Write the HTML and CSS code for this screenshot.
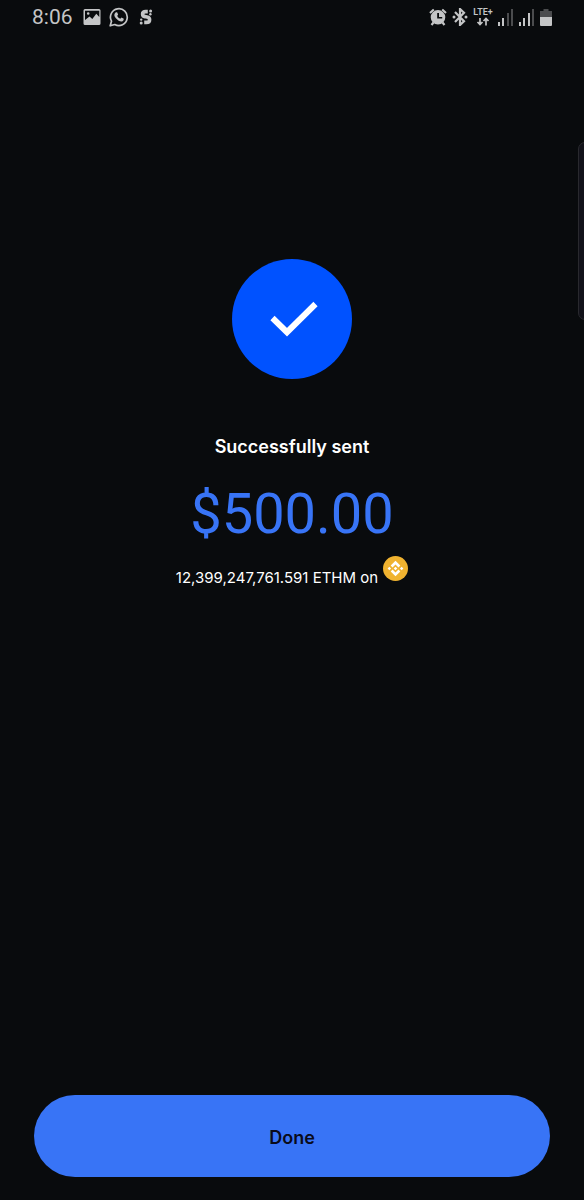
FILE: index.html
```html
<!DOCTYPE html>
<html lang="en">
<head>
<meta charset="utf-8">
<meta name="viewport" content="width=device-width, initial-scale=1">
<title>Successfully sent</title>
<link rel="stylesheet" href="styles.css">
</head>
<body>
<div class="screen">
  <header class="status">
    <div class="status-left">
      <span class="time">8:06</span>
      <svg class="icon" width="18" height="18" viewBox="0 0 18 18" aria-hidden="true"><path fill-rule="evenodd" d="M2 1h14q1.500 0 1.500 1.500v13q0 1.500-1.500 1.500H2Q.5 17 .5 15.500v-13Q.5 1 2 1zm0 1.800v9.200l4.500-3.600 2.800 2.600 4-5.200 3 3.200V2.800zM5.200 4.200a1.300 1.300 0 1 1 0 2.600 1.300 1.300 0 0 1 0-2.600z"/></svg>
      <svg class="icon" width="20" height="20" viewBox="0 0 20 20" aria-hidden="true"><path d="M1.200 18.800l1.300-4.600a8.400 8.400 0 1 1 3.300 3.300z" fill="none" stroke="currentColor" stroke-width="1.700" stroke-linejoin="round"/><path d="M6.800 5.200l1.300.1 1 2.300-.9 1.300q1 2 3.100 2.900l1.200-1.200 2.300 1.100q.1 1.800-1.300 2.500-1.500.7-4.200-.8-2.800-1.700-3.900-4.400-.6-2.400 1.400-3.800z"/></svg>
      <svg class="icon icon-s" width="14" height="18" viewBox="0 0 14 18" aria-hidden="true"><path d="M8.800 3.600H6.600Q3.600 3.600 3.600 6T6 8.600l2 .4q2.600.5 2.600 2.700 0 2.700-3.200 2.700H5.200" fill="none" stroke="currentColor" stroke-width="3.600"/><circle cx="11.600" cy="3" r="1.500"/><circle cx="11.400" cy="6.200" r="1.200"/><circle cx="2.200" cy="11.600" r="1.200"/><circle cx="2.200" cy="14.900" r="1.500"/></svg>
    </div>
    <div class="status-right">
      <svg class="icon" width="18" height="18" viewBox="0 0 18 18" aria-hidden="true"><path fill-rule="evenodd" d="M9 2a7.300 7.300 0 1 1 0 14.600A7.300 7.300 0 0 1 9 2zM8.200 5v5.500h5V9H10V5z"/><path d="M1 5l3.800-3.500M17 5l-3.800-3.500M4.500 14.500l-2 2.500M13.500 14.500l2 2.500" fill="none" stroke="currentColor" stroke-width="2.200"/></svg>
      <svg class="icon" width="16" height="18" viewBox="0 0 16 18" aria-hidden="true"><path d="M3 4l9 9.200L8 17V1l4 3.800L3 14" fill="none" stroke="currentColor" stroke-width="2.200"/><circle cx="2" cy="9" r="1.500"/><circle cx="14" cy="9" r="1.500"/></svg>
      <span class="network"><span class="lte">LTE+</span>
        <svg width="14" height="9" viewBox="0 0 14 9" aria-hidden="true"><path d="M4 1v7M1.500 5L4 7.500 6.500 5M10 8.500v-7M7.500 4L10 1.500 12.500 4" fill="none" stroke="currentColor" stroke-width="1.700"/></svg>
      </span>
      <svg class="icon" width="16" height="17" viewBox="0 0 16 17" aria-hidden="true"><path d="M0 13h2v4H0zM4 9h2v8H4z"/><path class="dim" d="M9 4h2v13H9zM13 0h2v17h-2z"/></svg>
      <svg class="icon" width="16" height="17" viewBox="0 0 16 17" aria-hidden="true"><path d="M0 13h2v4H0zM4 9h2v8H4zM9 4h2v13H9z"/><path class="dim" d="M13 0h2v17h-2z"/></svg>
      <svg class="icon icon-battery" width="12" height="17" viewBox="0 0 12 17" aria-hidden="true"><path class="dim" d="M3.500 0h5v2H12v6H0V2h3.500z"/><path d="M0 8h12v8q0 1-1 1H1q-1 0-1-1z"/></svg>
    </div>
  </header>

  <main class="result">
    <svg class="check" viewBox="0 0 120 120" role="img" aria-label="Complete"><circle cx="60" cy="60" r="60"/><path d="M40.500 59L55 73.200 83.500 45" /></svg>
    <h1 class="title">Successfully sent</h1>
    <p class="amount">$500.00</p>
    <p class="detail"><span>12,399,247,761.591 ETHM on</span>
      <svg class="coin" viewBox="0 0 26 26" role="img" aria-label="BNB"><circle cx="13" cy="13" r="13"/><path d="M13 5l5 5-1.900 1.900-3.100-3.100-3.100 3.100L8 10zM13 21l5-5-1.900-1.900-3.100 3.100-3.100-3.100L8 16zM13 11.100l1.900 1.900-1.900 1.900-1.900-1.900zM6.600 11.200L8.400 13l-1.800 1.800L4.800 13zM19.400 11.200l1.800 1.800-1.800 1.800-1.800-1.800z"/></svg>
    </p>
  </main>

  <footer class="actions"><button class="done" type="button">Done</button></footer>
  <div class="edge-handle"></div>
</div>
</body>
</html>
```

FILE: styles.css
```css
* { box-sizing: border-box; }

body {
  margin: 0;
  background: #090b0d;
  color: #ffffff;
  font-family: Inter, "Liberation Sans", sans-serif;
}

.screen {
  position: relative;
  display: flex;
  flex-direction: column;
  min-height: 100vh;
  overflow: hidden;
}

.status {
  display: flex;
  justify-content: space-between;
  align-items: center;
  height: 34px;
  padding: 0 32px;
  color: #c4c5c6;
}

.status-left,
.status-right { display: flex; align-items: center; }

.status-left { gap: 8px; }
.status-right { gap: 5px; }

.time {
  margin-right: 2px;
  font: 400 21px/24px Roboto, sans-serif;
}

.icon { flex: none; fill: currentColor; }
.icon-s { margin-left: 2px; }
.dim { fill: #4b4c4e; }

.network {
  display: flex;
  flex-direction: column;
  align-items: center;
  width: 20px;
}

.lte { font: 600 9px/9px Roboto, sans-serif; }

.result {
  flex: 1;
  display: flex;
  flex-direction: column;
  align-items: center;
  padding: 225px 32px 32px;
  text-align: center;
}

.check { width: 120px; height: 120px; fill: #0052ff; }
.check path { fill: none; stroke: #ffffff; stroke-width: 6; }

.title {
  margin: 56px 0 0;
  font-size: 18px;
  font-weight: 600;
  line-height: 24px;
}

.amount {
  margin: 23px 0 0;
  color: #3874f6;
  font: 400 56px/64px Roboto, sans-serif;
}

.detail {
  display: flex;
  align-items: flex-start;
  gap: 5px;
  margin: 10px 0 0;
  font-size: 15px;
  line-height: 20px;
}

.detail span { padding-top: 12px; }

.coin { width: 25px; height: 25px; fill: #f0b330; }
.coin path { fill: #ffffff; }

.actions { padding: 0 34px 23px; }

.done {
  display: block;
  width: 100%;
  padding: 31px 24px 27px;
  border: 0;
  border-radius: 41px;
  background: #3874f6;
  color: #0a0b1a;
  font: 600 18px/24px Inter, "Liberation Sans", sans-serif;
}

.edge-handle {
  position: absolute;
  top: 142px;
  right: -8px;
  width: 14px;
  height: 178px;
  border: 1px solid #29292e;
  border-radius: 7px;
  background: #12121a;
}
```
